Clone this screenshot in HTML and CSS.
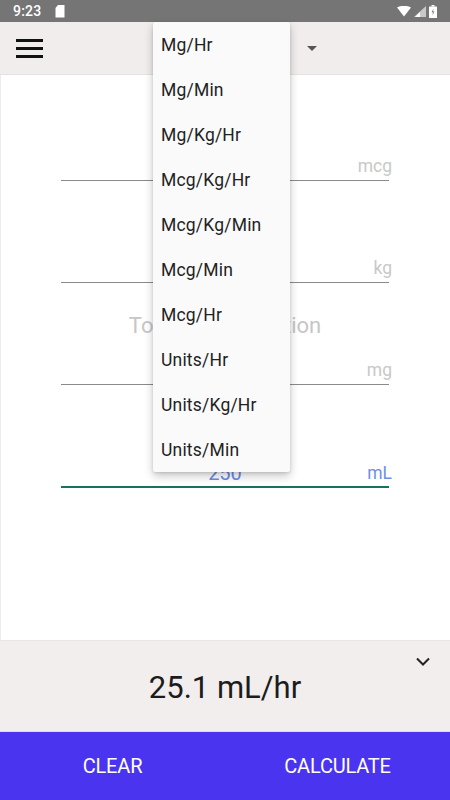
FILE: index.html
```html
<!DOCTYPE html>
<html>
<head>
<meta charset="utf-8">
<link rel="stylesheet" href="styles.css">
</head>
<body>
<div class="screen">
  <div class="statusbar">
    <div class="sb-left">
      <span class="time">9:23</span>
      <svg class="sd" width="10" height="13" viewBox="0 0 10 13"><path d="M3 0H9.5V12.5H0.5V3Z" fill="#fff"/></svg>
    </div>
    <div class="sb-right">
      <svg width="14" height="11" viewBox="0 0 14 11"><path d="M0 1.5Q7 -2 14 1.5L7 10.5Z" fill="#fff"/></svg>
      <svg width="12" height="11" viewBox="0 0 12 11"><path d="M12 0V11H0Z" fill="#c9c9c9"/><path d="M6 6V11H1Z" fill="#fff"/></svg>
      <svg width="8" height="13" viewBox="0 0 8 13"><rect x="2.5" y="0" width="3" height="1.5" fill="#fff"/><rect x="0" y="1.5" width="8" height="11.5" rx="0.5" fill="#fff"/><path d="M4.6 3.5L2.6 7.3H4L3.4 10.5L5.4 6.6H4Z" fill="#757575"/></svg>
    </div>
  </div>
  <div class="appbar">
    <div class="menu-btn"><span></span><span></span><span></span></div>
    <div class="spinner-arrow"></div>
  </div>
  <div class="main">
    <div class="group g1">
      <div class="field"><span class="value"></span><span class="suffix">mcg</span></div>
    </div>
    <div class="group">
      <div class="field"><span class="value"></span><span class="suffix">kg</span></div>
    </div>
    <div class="group g3">
      <div class="heading">Total Concentration</div>
      <div class="field"><span class="value"></span><span class="suffix">mg</span></div>
    </div>
    <div class="group g4">
      <div class="field active"><span class="value">250</span><span class="suffix">mL</span></div>
    </div>
  </div>
  <div class="result">
    <svg class="chev" width="14" height="9" viewBox="0 0 14 9"><path d="M1 1.5L7 7.5L13 1.5" fill="none" stroke="#222" stroke-width="2"/></svg>
    <div class="result-text">25.1 mL/hr</div>
  </div>
  <div class="actions">
    <div class="btn">CLEAR</div>
    <div class="btn">CALCULATE</div>
  </div>
  <ul class="dropdown">
    <li>Mg/Hr</li>
    <li>Mg/Min</li>
    <li>Mg/Kg/Hr</li>
    <li>Mcg/Kg/Hr</li>
    <li>Mcg/Kg/Min</li>
    <li>Mcg/Min</li>
    <li>Mcg/Hr</li>
    <li>Units/Hr</li>
    <li>Units/Kg/Hr</li>
    <li>Units/Min</li>
  </ul>
</div>
</body>
</html>
```

FILE: styles.css
```css
* { box-sizing: border-box; }
html, body { margin: 0; padding: 0; }
body { font-family: Roboto, "Noto Sans", sans-serif; background: #fff; }
.screen {
  position: relative;
  width: 450px;
  height: 800px;
  display: flex;
  flex-direction: column;
  overflow: hidden;
}
.statusbar {
  height: 22px;
  background: #757575;
  display: flex;
  justify-content: space-between;
  align-items: center;
  padding: 0 13px 0 13px;
  color: #fff;
}
.sb-left { display: flex; align-items: center; gap: 14px; }
.time { font-size: 14px; font-weight: 500; letter-spacing: 0.2px; }
.sb-right { display: flex; align-items: center; gap: 3px; }
.appbar {
  height: 53px;
  background: #f1edec;
  border-bottom: 1px solid #e6e2e1;
  display: flex;
  align-items: center;
  position: relative;
}
.menu-btn {
  margin-left: 16px;
  width: 27px;
  display: flex;
  flex-direction: column;
  gap: 5px;
}
.menu-btn span { display: block; height: 3px; background: #111; }
.spinner-arrow {
  margin-left: 264px;
  width: 0; height: 0;
  border-left: 5px solid transparent;
  border-right: 5px solid transparent;
  border-top: 5px solid #555;
}
.main {
  flex: 1;
  background: #fff;
  border-left: 1px solid #ececec;
  padding-top: 4px;
}
.group {
  height: 102px;
  display: flex;
  flex-direction: column;
  justify-content: flex-end;
  padding: 0 61px 0 60px;
}
.g3 { justify-content: space-between; padding-top: 30px; }
.g4 { height: 103px; }
.heading {
  text-align: center;
  font-size: 22px;
  color: #c6c6c6;
}
.field {
  position: relative;
  height: 32px;
  border-bottom: 1.3px solid #8a8a8a;
  display: flex;
  align-items: center;
  justify-content: center;
}
.field.active { border-bottom: 2px solid #17735f; height: 33px; }
.value { font-size: 20px; color: #6a8ae4; margin-top: 4px; }
.suffix {
  position: absolute;
  right: -3px;
  bottom: 4px;
  font-size: 17.5px;
  line-height: 20px;
  color: #c8c8c8;
}
.active .suffix { color: #6f90ea; bottom: 3px; }
.result {
  height: 92px;
  background: #f1eeed;
  border-top: 1px solid #e9e6e5;
  border-bottom: 1px solid #d9d6f8;
  position: relative;
  display: flex;
  align-items: center;
  justify-content: center;
}
.chev { position: absolute; right: 20px; top: 16px; }
.result-text { font-size: 31px; color: #1c1c1c; margin-top: 2px; }
.actions {
  height: 68px;
  background: #4a34ef;
  display: grid;
  grid-template-columns: 1fr 1fr;
  align-items: center;
}
.btn {
  text-align: center;
  color: #fff;
  font-size: 20px;
  letter-spacing: -0.2px;
}
.dropdown {
  position: absolute;
  left: 153px;
  top: 22px;
  width: 137px;
  margin: 0;
  padding: 0;
  list-style: none;
  background: #fafafa;
  box-shadow: 0 4px 10px rgba(0,0,0,0.22), 0 1px 3px rgba(0,0,0,0.12);
  border-radius: 2px;
}
.dropdown li {
  height: 45px;
  line-height: 46px;
  padding-left: 8px;
  font-size: 17.5px;
  color: #222;
  letter-spacing: 0.2px;
}
```
